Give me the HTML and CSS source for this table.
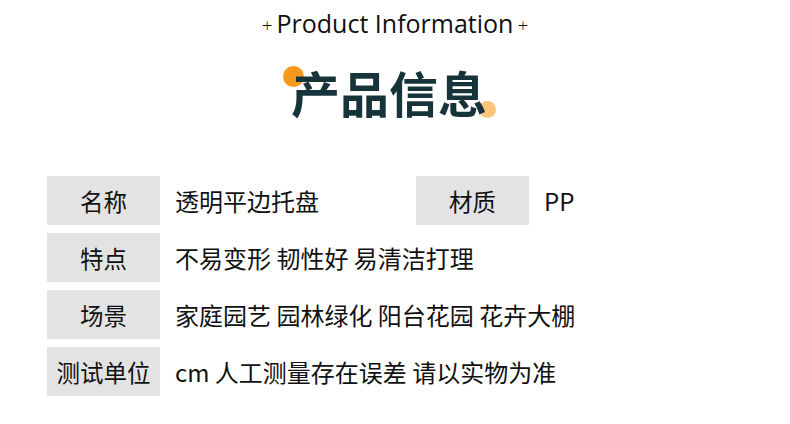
FILE: index.html
```html
<!DOCTYPE html>
<html lang="zh-CN">
<head>
  <meta charset="UTF-8" />
  <meta name="viewport" content="width=device-width, initial-scale=1.0" />
  <title>产品信息</title>
  <link rel="stylesheet" href="styles.css">
</head>
<body>
  <div class="page">
    <header>
      <div class="subtitle"><span class="plus">+</span>Product Information<span class="plus">+</span></div>
      <h1 class="title">
        <span class="dot dot-big"></span>
        产品信息
        <span class="dot dot-small"></span>
      </h1>
    </header>

    <section class="info">
      <div class="row">
        <div class="label">名称</div>
        <div class="value value-short">透明平边托盘</div>
        <div class="label">材质</div>
        <div class="value">PP</div>
      </div>
      <div class="row">
        <div class="label">特点</div>
        <div class="value">不易变形 韧性好 易清洁打理</div>
      </div>
      <div class="row">
        <div class="label">场景</div>
        <div class="value">家庭园艺 园林绿化 阳台花园 花卉大棚</div>
      </div>
      <div class="row">
        <div class="label">测试单位</div>
        <div class="value">cm 人工测量存在误差 请以实物为准</div>
      </div>
    </section>
  </div>
</body>
</html>
```

FILE: styles.css
```css
:root {
  --title-color: #17343a;
  --label-bg: #e3e3e3;
}

body {
  margin: 0;
  background: #ffffff;
  color: #111111;
  font-family: "Noto Sans CJK SC", "Noto Sans", sans-serif;
}

.page {
  width: 790px;
  height: 424px;
  box-sizing: border-box;
  padding: 6px 0 0 47px;
}

/* TITULO */
header {
  display: flex;
  flex-direction: column;
  align-items: center;
  margin-left: -47px;
}

.subtitle {
  font-family: "Open Sans", sans-serif;
  font-size: 25px;
  line-height: 30px;
  color: #111111;
  display: flex;
  align-items: center;
}

.plus {
  font-size: 19px;
  font-weight: 300;
  margin: 4px 4px 0;
}

.title {
  position: relative;
  margin: 17px 0 0;
  font-size: 49px;
  line-height: 70px;
  font-weight: 700;
  color: var(--title-color);
  left: -6px;
}

.dot {
  position: absolute;
  border-radius: 50%;
  z-index: -1;
}

.dot-big {
  width: 21px;
  height: 21px;
  background: #f7991c;
  left: -8px;
  top: 9px;
}

.dot-small {
  width: 17px;
  height: 17px;
  background: #fdc47a;
  right: -9px;
  top: 44px;
}

/* LINHAS */
.info {
  margin-top: 49px;
  display: flex;
  flex-direction: column;
  gap: 8px;
}

.row {
  display: flex;
  gap: 15px;
  height: 49px;
}

.label {
  width: 113px;
  background: var(--label-bg);
  display: flex;
  align-items: center;
  justify-content: center;
  font-size: 23.5px;
}

.value {
  display: flex;
  align-items: center;
  font-size: 24px;
}

.value-short {
  width: 226px;
}
```
